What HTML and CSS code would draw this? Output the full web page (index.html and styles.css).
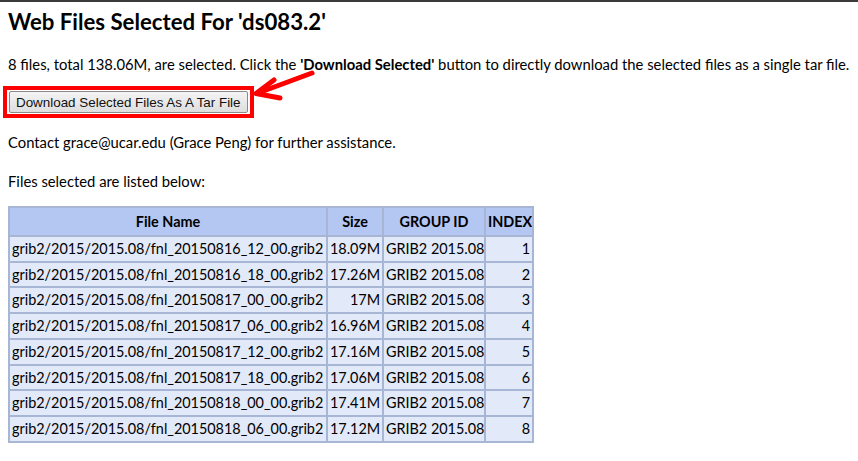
FILE: index.html
```html
<!DOCTYPE html>
<html>
<head>
<meta charset="utf-8">
<link rel="stylesheet" href="styles.css">
</head>
<body>
<div class="page">
  <h1 class="title">Web Files Selected For 'ds083.2'</h1>
  <p class="info">8 files, total 138.06M, are selected. Click the <b>'Download Selected'</b> button to directly download the selected files as a single tar file.</p>
  <div class="btn-wrap">
    <div class="highlight"><button class="btn">Download Selected Files As A Tar File</button></div>
    <svg class="arrow" width="70" height="40" viewBox="0 0 70 40">
      <path d="M6 27 L60 7" stroke="#f00" stroke-width="5" stroke-linecap="round" fill="none"/>
      <path d="M22 14 L4 27.5 L28 32" stroke="#f00" stroke-width="5" stroke-linecap="round" stroke-linejoin="round" fill="none"/>
    </svg>
  </div>
  <p class="info">Contact grace@ucar.edu (Grace Peng) for further assistance.</p>
  <p class="info">Files selected are listed below:</p>
  <table class="files">
    <colgroup>
      <col class="c-name"><col class="c-size"><col class="c-group"><col class="c-index">
    </colgroup>
    <thead>
      <tr><th>File Name</th><th>Size</th><th>GROUP ID</th><th>INDEX</th></tr>
    </thead>
    <tbody>
      <tr><td>grib2/2015/2015.08/fnl_20150816_12_00.grib2</td><td class="num">18.09M</td><td>GRIB2 2015.08</td><td class="num">1</td></tr>
      <tr><td>grib2/2015/2015.08/fnl_20150816_18_00.grib2</td><td class="num">17.26M</td><td>GRIB2 2015.08</td><td class="num">2</td></tr>
      <tr><td>grib2/2015/2015.08/fnl_20150817_00_00.grib2</td><td class="num">17M</td><td>GRIB2 2015.08</td><td class="num">3</td></tr>
      <tr><td>grib2/2015/2015.08/fnl_20150817_06_00.grib2</td><td class="num">16.96M</td><td>GRIB2 2015.08</td><td class="num">4</td></tr>
      <tr><td>grib2/2015/2015.08/fnl_20150817_12_00.grib2</td><td class="num">17.16M</td><td>GRIB2 2015.08</td><td class="num">5</td></tr>
      <tr><td>grib2/2015/2015.08/fnl_20150817_18_00.grib2</td><td class="num">17.06M</td><td>GRIB2 2015.08</td><td class="num">6</td></tr>
      <tr><td>grib2/2015/2015.08/fnl_20150818_00_00.grib2</td><td class="num">17.41M</td><td>GRIB2 2015.08</td><td class="num">7</td></tr>
      <tr><td>grib2/2015/2015.08/fnl_20150818_06_00.grib2</td><td class="num">17.12M</td><td>GRIB2 2015.08</td><td class="num">8</td></tr>
    </tbody>
  </table>
</div>
</body>
</html>
```
FILE: styles.css
```css
html, body {
  margin: 0;
  padding: 0;
  background: #fff;
}
body {
  border-top: 2px solid #3a3a3a;
  font-family: Lato, "Noto Sans", sans-serif;
  color: #000;
}
.page {
  padding: 0 8px;
}
.title {
  margin: 0;
  padding-top: 5px;
  font-size: 22.2px;
  line-height: 30px;
  font-weight: bold;
}
.info {
  margin: 0;
  font-size: 14.8px;
  line-height: 20px;
  white-space: nowrap;
}
.title + .info {
  margin-top: 17px;
}
.btn-wrap {
  position: relative;
  margin: 12px 0 0 -5px;
  height: 31px;
}
.highlight {
  display: inline-block;
  border: 4px solid #f00;
  padding: 1px 2px;
}
.btn {
  display: block;
  font-family: "Liberation Sans", Arial, sans-serif;
  font-size: 13.4px;
  height: 22px;
  padding: 0 6px;
  border: 1px solid #8a8a8a;
  border-radius: 2px;
  background: linear-gradient(#f4f4f4, #dedede);
  color: #111;
}
.arrow {
  position: absolute;
  left: 249px;
  top: -20px;
}
.btn-wrap + .info {
  margin-top: 15px;
}
.info + .info {
  margin-top: 19px;
}
.files {
  margin-top: 15px;
  border-collapse: collapse;
  table-layout: fixed;
  width: 524px;
  font-size: 14.4px;
}
.c-name { width: 318px; }
.c-size { width: 56px; }
.c-group { width: 102px; }
.c-index { width: 48px; }
.files th, .files td {
  border: 2px solid #a8b6d6;
  padding: 2px 2px;
  white-space: nowrap;
  overflow: hidden;
}
.files th {
  background: #b4c6f2;
  line-height: 23px;
  font-weight: bold;
}
.files td {
  background: #e2e9f8;
  line-height: 19.7px;
}
.files td.num {
  text-align: right;
}
```
